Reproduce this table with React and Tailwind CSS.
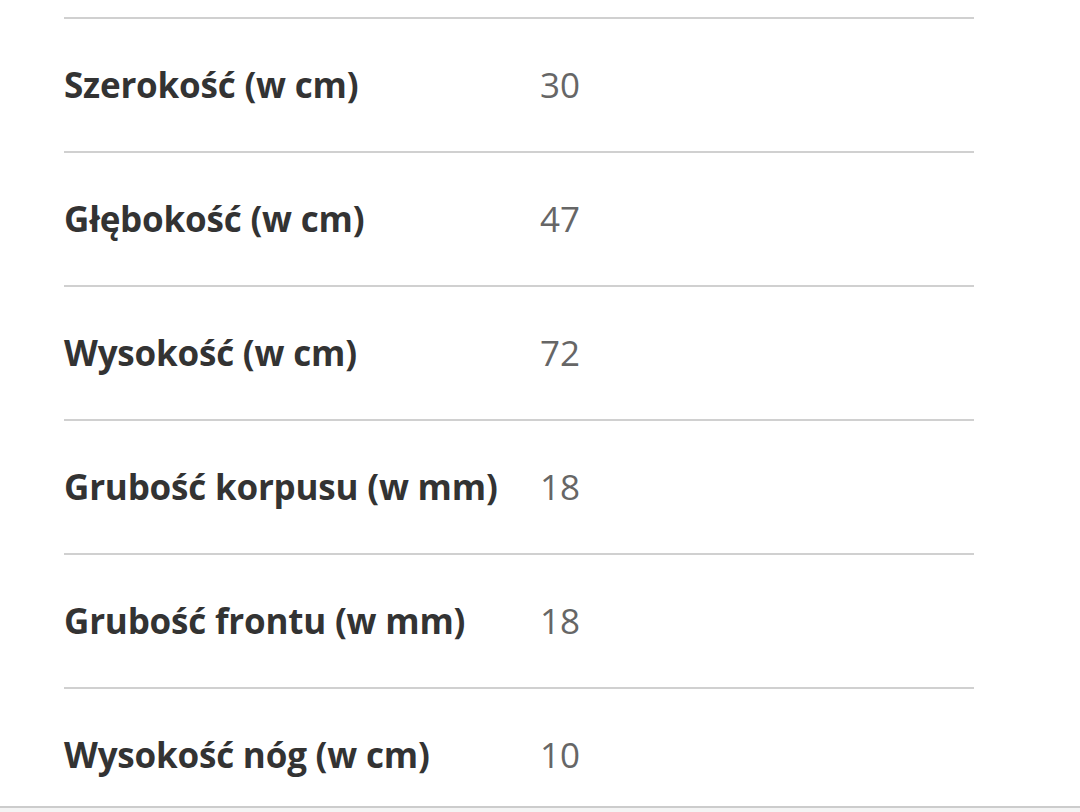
const rows = [
  ["Szerokość (w cm)", "30"],
  ["Głębokość (w cm)", "47"],
  ["Wysokość (w cm)", "72"],
  ["Grubość korpusu (w mm)", "18"],
  ["Grubość frontu (w mm)", "18"],
  ["Wysokość nóg (w cm)", "10"],
];

export default function App() {
  return (
    <div className="h-[812px] overflow-hidden bg-white flex flex-col" style={{ fontFamily: '"Open Sans", "Noto Sans", sans-serif' }}>
      <div className="h-[806px] overflow-hidden pt-[17px] pl-16 w-[974px]">
        {rows.map(([label, value]) => (
          <div key={label} className="border-t-2 border-[#d0d0d0] h-[134px] flex items-center">
            <div className="w-[476px] text-[35px] font-bold text-[#333333] tracking-[-0.2px]">{label}</div>
            <div className="text-[35px] text-[#666666]">{value}</div>
          </div>
        ))}
      </div>
      <div className="border-t-2 border-[#cccccc] flex-1 bg-[#f4f4f4]" />
    </div>
  );
}
